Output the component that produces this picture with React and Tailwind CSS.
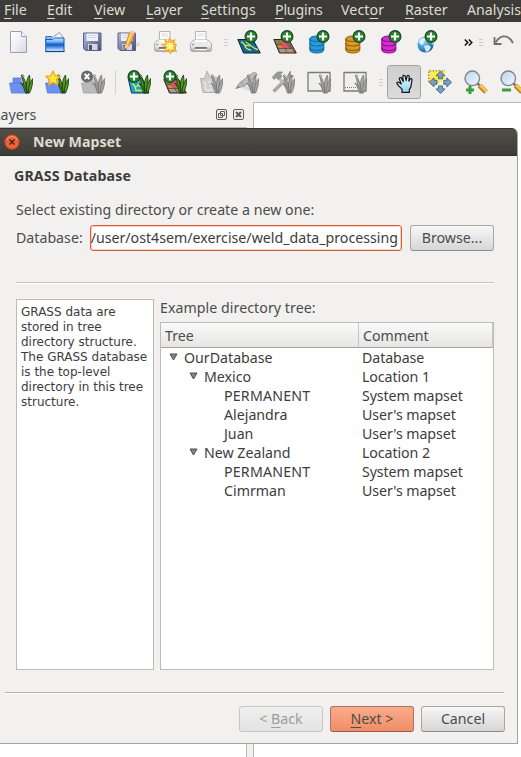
import React from "react";

const Icon = ({ children }) => (
  <svg width="24" height="24" viewBox="0 0 24 24" className="block shrink-0">
    {children}
  </svg>
);

const Gradients = () => (
  <svg width="0" height="0" className="absolute">
    <defs>
      <linearGradient id="paper" x1="0" y1="0" x2="1" y2="1">
        <stop offset="0" stopColor="#fff" />
        <stop offset=".5" stopColor="#f0f1f6" />
        <stop offset="1" stopColor="#d3d6e2" />
      </linearGradient>
      <linearGradient id="folder" x1="0" y1="0" x2="0" y2="1">
        <stop offset="0" stopColor="#cfe9ff" />
        <stop offset=".25" stopColor="#7fbcf5" />
        <stop offset=".5" stopColor="#1458c8" />
        <stop offset=".68" stopColor="#4d92e6" />
        <stop offset="1" stopColor="#f4faff" />
      </linearGradient>
      <linearGradient id="disk" x1="0" y1="0" x2="1" y2="1">
        <stop offset="0" stopColor="#b9c0dc" />
        <stop offset=".5" stopColor="#7d85aa" />
        <stop offset="1" stopColor="#474d72" />
      </linearGradient>
      <linearGradient id="printer" x1="0" y1="0" x2="0" y2="1">
        <stop offset="0" stopColor="#fdfdfd" />
        <stop offset=".6" stopColor="#e4e4e4" />
        <stop offset="1" stopColor="#a4a4a4" />
      </linearGradient>
      <radialGradient id="globe" cx=".35" cy=".3" r=".8">
        <stop offset="0" stopColor="#a8dcfa" />
        <stop offset=".5" stopColor="#3d9ad8" />
        <stop offset="1" stopColor="#0d4c92" />
      </radialGradient>
      <linearGradient id="lens" x1="0" y1="0" x2="1" y2="1">
        <stop offset="0" stopColor="#b9d3f0" />
        <stop offset="1" stopColor="#f2f8ff" />
      </linearGradient>
      <linearGradient id="hand" x1="0" y1="0" x2="0" y2="1">
        <stop offset="0" stopColor="#eaf8ff" />
        <stop offset="1" stopColor="#8fd3f8" />
      </linearGradient>
    </defs>
  </svg>
);

const Plus = ({ x = 14, y = 6.5 }) => (
  <g transform={`translate(${x} ${y})`}>
    <circle r="5.900" fill="#2a8230" stroke="#164d1c" strokeWidth="1.200" />
    <path d="M0-4V4M-4 0H4" stroke="#fff" strokeWidth="2.200" />
  </g>
);

const Grass = ({ gray }) => (
  <g
    fill={gray ? "#a6a6a6" : "#57981f"}
    stroke={gray ? "#7b7b7b" : "#1c3d0e"}
    strokeWidth=".9"
    strokeLinejoin="round"
  >
    <path d="M17 23C14.500 18 14.500 11 12.500 5.500c3.500 3 5 9 5.500 17.500z" />
    <path d="M18.500 23C16.500 16 17.500 9 20.500 5c1 6 .2 12-1 18z" />
    <path d="M19.200 23c0-6 1.500-11 4.600-14.500C23.800 14 22.500 19 20.500 23z" />
    <path d="M16.500 23c-1-4-2.200-7-4.700-10 3.800 2 5.400 5 6.200 10z" />
    <path d="M15 6.500c-.5-2-2.500-2.200-3-.5" fill="none" />
  </g>
);

const Floppy = () => (
  <g>
    <path d="M2.500 3h17.500v17.500h-15.500l-2-2z" fill="url(#disk)" stroke="#5a618a" />
    <path d="M5.500 3.500h11.500v7.500h-11.500z" fill="#eef1f8" />
    <path d="M7 5.500h8.500M7 7.500h8.500" stroke="#cdd1df" strokeWidth=".8" />
    <path d="M7 14h9.500v6h-9.500z" fill="#d4d7e2" />
    <path d="M8 15h3v5H8z" fill="#4b5275" />
  </g>
);

const Printer = () => (
  <g>
    <path d="M6.500 10V1.500h10.500V10z" fill="#fbfbfb" stroke="#b4b4b4" />
    <path d="M8.500 4h6.500M8.500 6h6.500" stroke="#dedede" />
    <path d="M4.500 10h14.500l3.500 3.500v6q0 2-2 2h-17q-2 0-2-2v-6z" fill="url(#printer)" stroke="#a5a5a5" strokeWidth=".9" />
    <path d="M6 9.500h12l1 3.500H5z" fill="#fdfdfd" stroke="#cacaca" strokeWidth=".6" />
    <path d="M6 18h12" stroke="#2e2e2e" strokeWidth="1.200" />
    <path d="M6.500 19.500h11" stroke="#fff" strokeWidth="1.300" />
    <path d="M3 14.500h2" stroke="#62c44c" strokeWidth="1.400" />
  </g>
);

const NewFile = () => (
  <Icon>
    <path d="M1.500 1.500h11l5 5v16h-16z" fill="url(#paper)" stroke="#9a9dab" />
    <path d="M12.500 1.500v5h5" fill="#fff" stroke="#9a9dab" />
  </Icon>
);
const OpenFile = () => (
  <Icon>
    <path d="M.8 6.500h6l1.500 2H18.500v4H.8z" fill="#7fc0f8" stroke="#2c74cf" />
    <path d="M4 10L14.500 2.500 18.500 8v4H4z" fill="#f5f6fc" stroke="#8088bb" strokeWidth=".9" />
    <path d="M.8 9.500h7l1.500-1.500h9.700V21.500H.8z" fill="url(#folder)" stroke="#1556bb" />
    <path d="M.5 21.500h19" stroke="#0c3f9b" strokeWidth="1.200" />
  </Icon>
);
const Save = () => (
  <Icon>
    <Floppy />
  </Icon>
);
const SaveAs = () => (
  <Icon>
    <path d="M17 14l5.500-2v3.500l-5 2z" fill="#d6d6d6" />
    <g transform="translate(-1.500 0)">
      <Floppy />
    </g>
    <path d="M7.500 19l1.300-6L12.500 2.500l4.800 1.500L12.500 15.500z" fill="#f8ad36" stroke="#d98022" strokeWidth=".7" />
    <path d="M14.500 3.500L10.300 14" stroke="#ffdf8c" strokeWidth="1.400" />
    <path d="M12.500 3l1-2.500 4.500 1.300-.8 2.700z" fill="#f5bca6" />
    <path d="M7.500 19l1.200-4.500 2.800 1.500z" fill="#f8e2b8" />
  </Icon>
);
const PrintNew = () => (
  <Icon>
    <Printer />
    <path
      d="M16.500 8.500l1.300 4L21.500 10l-1.200 4.200 3.500.8-3.300 2.200 2.700 4-4-1.700-1.700 4-1.500-4-4.500 2.200 2-4.700L9.500 15l4-1L12 10l3.400 2.500z"
      fill="#fff78a"
      stroke="#f8a51d"
      strokeWidth="1.200"
    />
  </Icon>
);
const Print = () => (
  <Icon>
    <Printer />
  </Icon>
);
const AddVector = () => (
  <Icon>
    <path d="M.8 9.500h15l7.500 13.500H6.500z" fill="#11679b" stroke="#15202c" />
    <path d="M4 12c3 0 2 3 5 3.500s5-.5 7 1.500 2 2 5 2.500M8 15.500c0 3 3 4 6 4.500M9 11.500c0 2 4 2 5 5" fill="none" stroke="#dbe63c" strokeWidth="1.300" />
    <Plus />
  </Icon>
);
const RasterTiles = () => (
  <g>
    <path d="M.8 9.500h15l7.500 13.500H6.500z" fill="#a55b3e" stroke="#332019" />
    <path d="M6 10h5.500l5 8.500h-5.500z" fill="#e0506f" />
    <path d="M1.500 10H5.500l2.500 4.500H4z" fill="#679145" />
    <path d="M4 14.500h4l2.200 4H6z" fill="#c88a3c" />
    <path d="M5.500 18.500h13l2 3.800H7.500z" fill="#a39a90" />
    <path d="M14 14.500h4l2 4h-3.500z" fill="#7a5b60" />
    <path d="M3 14.500h5.500M5 18.500h14M12 18.500l2 4" stroke="#533d35" strokeWidth=".7" />
  </g>
);
const AddRaster = () => (
  <Icon>
    <RasterTiles />
    <Plus />
  </Icon>
);
const Database = ({ fill, stroke }) => (
  <Icon>
    <path d="M.8 9c0-4 14-4 14 0v11c0 4-14 4-14 0z" fill={fill} stroke={stroke} />
    <path d="M.8 8.500c0 4 14 4 14 0M.8 13c0 4 14 4 14 0M.8 17.500c0 4 14 4 14 0" fill="none" stroke={stroke} strokeWidth="1.200" />
    <Plus />
  </Icon>
);
const AddGlobe = () => (
  <Icon>
    <circle cx="8.500" cy="14.500" r="8" fill="url(#globe)" />
    <path d="M1.500 12c2-4 5-5 7-4l1 2-3 1v3l-2 1zM7 16l4-1 3 2-2 4-3 1zM13 11l3 1v3l-2-2z" fill="#edfaff" opacity=".85" />
    <Plus />
  </Icon>
);
const Undo = () => (
  <Icon>
    <path d="M3.500 12.500C9 4 16.500 4.500 21 13" fill="none" stroke="#777" strokeWidth="2" />
    <path d="M2.500 7v7H9.500" fill="none" stroke="#6d6d6d" strokeWidth="1.800" />
  </Icon>
);

const Blocks = ({ fill = "#6b90f5", stroke = "#5d7cc9" }) => (
  <path d="M.5 13H4V8h8v5h9l-1.500 10H2.500z" fill={fill} stroke={stroke} strokeWidth=".8" />
);
const OpenMapset = () => (
  <Icon>
    <Blocks />
    <path d="M4 13h9" stroke="#5473c4" strokeWidth=".8" />
    <Grass />
  </Icon>
);
const NewMapset = () => (
  <Icon>
    <Blocks />
    <Grass />
    <path d="M8 1l2.200 4.800 5 .4-3.800 3.600 1.300 5.400L8 12.300l-4.500 2.900 1.200-5.400L.9 6.200l5-.4z" fill="#ffe92e" stroke="#f0a41c" strokeWidth="1.200" strokeLinejoin="round" />
  </Icon>
);
const CloseMapset = () => (
  <Icon>
    <Blocks fill="#b9b9b9" stroke="#a2a2a2" />
    <Grass gray />
    <circle cx="6" cy="6.500" r="6" fill="#6b6b6b" />
    <path d="M3.700 3.800l4.600 5.400M8.300 3.800L3.700 9.200" stroke="#fff" strokeWidth="2" />
  </Icon>
);
const GrassVector = () => (
  <Icon>
    <path d="M1 7.500h14l7 15.500H4.500z" fill="#1ea3d8" stroke="#14364c" />
    <path d="M5 14c3 0 3 3 4 6.500h6M12 12c-1 3-1 5-4 5M10 15l5 2" fill="none" stroke="#dfeb38" strokeWidth="1.300" />
    <Grass />
    <Plus x={7} />
  </Icon>
);
const GrassRaster = () => (
  <Icon>
    <RasterTiles />
    <Grass />
    <Plus x={7} />
  </Icon>
);
const GrassStar = () => (
  <Icon>
    <path d="M1.500 8.500h4L8 1l3 6.500h8l1 15H4z" fill="#cfcfcf" stroke="#b2b2b2" />
    <path d="M5 12l2 3-1 3 3 3 4-2M9 11l4 3-2 3" fill="none" stroke="#e8e8e8" strokeWidth="1.400" />
    <Grass gray />
  </Icon>
);
const GrassEdit = () => (
  <Icon>
    <path d="M6 18l6-2 6 6z" fill="#d9d9d9" />
    <path d="M.8 18.500L5.500 12 17.500 3q4.500-1.500 4.500 2.500L9.500 16z" fill="#bcbcbc" stroke="#979797" strokeWidth=".9" />
    <path d="M.8 18.500l2.400-3.300 2 2.200z" fill="#888" />
    <path d="M5.500 12l4 4" stroke="#8d8d8d" />
    <Grass gray />
  </Icon>
);
const GrassTools = () => (
  <Icon>
    <path d="M2.500 21.500L19 5.500" stroke="#a9a9a9" strokeWidth="3.600" />
    <path d="M8 8l11 13" stroke="#b9b9b9" strokeWidth="3" />
    <path d="M1.500 7l5-5h5l-2 2.500 1.500 2-4 3-2-2-2 2zM17 5l2.500-4v4l3 1-3 3z" fill="#999" stroke="#868686" strokeWidth=".8" />
    <Grass gray />
  </Icon>
);
const GrassRegion = ({ dashed }) => (
  <Icon>
    <path d="M1 2.500h22v18.500H1z" fill="#efefee" stroke="#7b7b7b" strokeWidth="1.300" />
    {dashed && <path d="M2 17.500h20" stroke="#777" strokeDasharray="1 1" />}
    <Grass gray />
  </Icon>
);
const Hand = () => (
  <Icon>
    <g transform="translate(3.800 .6)">
      <path
        d="M6.200 21.800v-3.300L2.500 15 1 12.300q1-1.800 3 0l1.500 1L3.500 8.500q0-2.300 2-1.200L7.500 11 7 6q.3-2 2.300-.8L10.300 10l1-4.500q1.200-1.500 2.200.3L13 10.500l1.500-2.300q1.800-.8 1.700 1.200L15 16.500l-1.500 2.500v2.800z"
        fill="url(#hand)"
        stroke="#151515"
        strokeWidth="1.200"
        strokeLinejoin="round"
      />
    </g>
  </Icon>
);
const PanSelection = () => (
  <Icon>
    <path d="M1 1h16v7l-7 6H1z" fill="#ffed48" />
    <path d="M.8 12V.8H17" fill="none" stroke="#6d6020" strokeDasharray="1.500 1.500" />
    <g fill="#7c9fba" stroke="#3f6380" strokeWidth=".9">
      <path d="M12.500 1.200l4.500 4.600h-2.500v3h-4v-3H8zM12.500 23.500L8 18.900h2.500v-3h4v3H17zM1.200 12.300l4.800-4.500v2.500h3v4H6v2.500zM23.600 12.300l-4.800-4.500v2.500h-3v4h3v2.500z" />
    </g>
  </Icon>
);
const Zoom = ({ minus }) => (
  <Icon>
    <path d="M13.500 13.500l2.500 2.500" stroke="#777" strokeWidth="2.500" />
    <path d="M15.500 15.500l6.500 6.500" stroke="#c07f24" strokeWidth="5" />
    <path d="M16 15l6.500 6.500" stroke="#fbc650" strokeWidth="2.800" />
    <circle cx="8.300" cy="8.300" r="7.300" fill="url(#lens)" stroke="#858585" strokeWidth="1.400" />
    <path d={minus ? "M2 20h9" : "M2 20h8M6 16v8"} stroke="#37a03a" strokeWidth="3" />
  </Icon>
);

const Handle = () => (
  <div className="flex w-1 shrink-0 flex-col gap-0.5">
    <i className="h-px bg-[#cfccc9]" />
    <i className="h-px bg-[#cfccc9]" />
    <i className="h-px bg-[#cfccc9]" />
  </div>
);

const Key = ({ children }) => (
  <span className="underline decoration-1 underline-offset-[3px]">{children}</span>
);

const MenuBar = () => (
  <div className="flex h-[22px] shrink-0 bg-[#3c3b37] pl-1 leading-[20px] text-[#dfdbd2]">
    <div className="w-[43px] shrink-0"><Key>F</Key>ile</div>
    <div className="w-[47px] shrink-0"><Key>E</Key>dit</div>
    <div className="w-[52px] shrink-0"><Key>V</Key>iew</div>
    <div className="w-[55px] shrink-0"><Key>L</Key>ayer</div>
    <div className="w-[74px] shrink-0 tracking-[0.1px]"><Key>S</Key>ettings</div>
    <div className="w-[66px] shrink-0 tracking-[-0.2px]"><Key>P</Key>lugins</div>
    <div className="w-[64px] shrink-0 tracking-[0.1px]">Vect<Key>o</Key>r</div>
    <div className="w-[62px] shrink-0"><Key>R</Key>aster</div>
    <div className="shrink-0">Analysis</div>
  </div>
);

const Toolbars = () => (
  <div className="h-20 shrink-0">
    <div className="flex h-10 items-center pl-[9px]">
      <div className="flex gap-3">
        <NewFile />
        <OpenFile />
        <Save />
        <SaveAs />
        <PrintNew />
        <Print />
      </div>
      <div className="flex w-6 shrink-0 justify-center pl-0.5"><Handle /></div>
      <div className="flex gap-3">
        <AddVector />
        <AddRaster />
        <Database fill="#299bdc" stroke="#176aa6" />
        <Database fill="#d79b28" stroke="#91600f" />
        <Database fill="#d52bd0" stroke="#8b0f8a" />
        <AddGlobe />
      </div>
      <svg width="9" height="7" viewBox="0 0 9 7" className="ml-[23px] shrink-0">
        <path d="M.8.5l3 3-3 3M4.800.5l3 3-3 3" fill="none" stroke="#111" strokeWidth="1.500" />
      </svg>
      <div className="ml-[6px]"><Handle /></div>
      <div className="ml-[9px]"><Undo /></div>
    </div>
    <div className="flex h-10 items-center pl-[9px]">
      <div className="flex gap-3">
        <OpenMapset />
        <NewMapset />
        <CloseMapset />
      </div>
      <div className="ml-[10px] mr-[11px] h-6 w-px shrink-0 bg-[#d5d3d0]" />
      <div className="flex gap-3">
        <GrassVector />
        <GrassRaster />
        <GrassStar />
        <GrassEdit />
        <GrassTools />
        <GrassRegion />
        <GrassRegion dashed />
      </div>
      <div className="ml-3"><Handle /></div>
      <div className="ml-1 flex h-[34px] w-[34px] shrink-0 items-center justify-center rounded-[3px] border border-[#a6a4a1] bg-linear-to-b from-[#cfcfcf] to-[#dbdbdb]">
        <Hand />
      </div>
      <div className="ml-[7px] flex gap-3">
        <PanSelection />
        <Zoom />
        <Zoom minus />
      </div>
    </div>
  </div>
);

const DockButton = ({ children }) => (
  <svg width="11" height="11" viewBox="0 0 11 11" fill="none" stroke="#5d5b58">
    <rect x=".5" y=".5" width="10" height="10" rx="1.500" />
    {children}
  </svg>
);

const Workspace = () => (
  <div className="flex min-h-0 flex-1">
    <div className="flex w-[247px] shrink-0 flex-col">
      <div className="flex h-[26px] shrink-0 items-center justify-between border-b border-[#b9b7b3] pr-[3px]">
        <span className="-ml-[7px]">Layers</span>
        <div className="flex gap-1.5">
          <DockButton>
            <path d="M4.500 2.500h4v4h-4zM2.500 4.500h4v4h-4z" />
          </DockButton>
          <DockButton>
            <path d="M3 3l5 5M8 3L3 8" strokeWidth="2" />
          </DockButton>
        </div>
      </div>
      <div className="flex-1 border-r border-[#b9b7b3] bg-white" />
    </div>
    <div className="ml-1.5 flex-1 border-l border-t border-[#b9b7b3] bg-white" />
  </div>
);

const BUTTON = "flex h-[26px] w-[84px] shrink-0 items-center justify-center rounded-[3px] border pb-px";

const COMMON = "border-[#aaa8a5] border-b-[#8e8c89] bg-linear-to-b from-[#f7f7f7] to-[#d6d6d6]";

const rows = [
  [0, "OurDatabase", "Database", true],
  [1, "Mexico", "Location 1", true],
  [2, "PERMANENT", "System mapset"],
  [2, "Alejandra", "User's mapset"],
  [2, "Juan", "User's mapset"],
  [1, "New Zealand", "Location 2", true],
  [2, "PERMANENT", "System mapset"],
  [2, "Cimrman", "User's mapset"],
];
const INDENT = ["pl-[8px]", "pl-[28px]", "pl-[48px]"];

const Tree = () => (
  <div className="flex flex-1 flex-col border border-[#bebbb6] bg-white text-[#3c3c3c]">
    <div className="flex h-[25px] shrink-0 border-b border-[#a6a4a1] bg-linear-to-b from-[#fafafa] to-[#e6e5e4] leading-[25px] text-[#4c4c4c]">
      <div className="w-[198px] border-r border-[#c8c6c3] pl-1">Tree</div>
      <div className="flex-1 border-r border-[#c8c6c3] pl-1 tracking-[-0.05px]">Comment</div>
    </div>
    {rows.map(([level, name, comment, open], i) => (
      <div key={i} className="flex h-[19px] shrink-0 leading-[19px]">
        <div className={`flex w-[201px] shrink-0 items-center ${INDENT[level]}`}>
          <span className="w-[15px] shrink-0">
            {open && (
              <svg width="9" height="8" viewBox="0 0 9 8" className="-mt-0.5 block">
                <path d="M1 1h7L4.500 7z" fill="#858585" stroke="#4c4c4c" />
              </svg>
            )}
          </span>
          <span className={name === "PERMANENT" ? "tracking-[0.2px]" : ""}>{name}</span>
        </div>
        <div className="tracking-[-0.08px]">{comment}</div>
      </div>
    ))}
  </div>
);

const Dialog = () => (
  <div className="absolute left-0 top-[128px] flex h-[616px] w-[518px] flex-col overflow-hidden rounded-tr-[6px] border-b border-r border-[#a5a3a0] bg-[#f2f1f0]">
    <div className="-mr-px flex h-7 shrink-0 items-center border-b border-t border-b-[#2f2e2b] border-t-[#33322e] bg-linear-to-b from-[#4f4e47] to-[#3d3c38] pl-[4px] text-[#dfdbd2]">
      <svg width="16" height="16" viewBox="0 0 16 16">
        <circle cx="8" cy="8" r="7.300" fill="#ee6237" stroke="#b5431f" />
        <path d="M2.500 6a6 6 0 0 1 11 0" fill="none" stroke="#f99673" />
        <path d="M5.500 5.500l5 5M10.500 5.500l-5 5" stroke="#442419" strokeWidth="1.400" />
      </svg>
      <b className="ml-[13px]">New Mapset</b>
    </div>
    <div className="pl-[14px] pt-[10px] font-bold leading-5 tracking-[0.12px] text-[#3c3c3c]">GRASS Database</div>
    <div className="pl-4 pt-[14px] leading-5 tracking-[0.02px]">Select existing directory or create a new one:</div>
    <div className="mt-[5px] flex h-[26px] shrink-0 items-center pl-4">
      <span className="w-[74px]">Database:</span>
      <div className="flex h-[26px] w-[312px] justify-end overflow-hidden whitespace-nowrap rounded-[3px] border border-[#dd5b31] bg-white pr-[3px] leading-[23px] text-[#3c3c3c] shadow-[inset_0_0_0_1px_#f8d4c8]">
        /user/ost4sem/exercise/weld_data_processing
      </div>
      <div className={`ml-2 ${BUTTON} ${COMMON}`}>Browse...</div>
    </div>
    <div className="ml-4 mt-[31px] h-0.5 w-[478px] shrink-0 border-b border-t border-b-white border-t-[#c4c2bf]" />
    <div className="ml-4 mt-[15px] flex h-[371px] w-[478px] shrink-0 gap-1.5">
      <div className="w-[138px] shrink-0 whitespace-nowrap border border-[#bebbb6] bg-white pl-1 pt-[5px] font-['DejaVu_Sans',sans-serif] text-[12px] leading-[15px] text-[#3c3c3c]">
        GRASS data are<br />stored in tree<br />directory structure.<br />The GRASS database<br />is the top-level<br />directory in this tree<br />structure.
      </div>
      <div className="flex flex-1 flex-col">
        <div className="h-[23px] shrink-0 leading-[18px] tracking-[0.05px]">Example directory tree:</div>
        <Tree />
      </div>
    </div>
    <div className="ml-[5px] mt-[22px] h-0.5 w-[499px] shrink-0 border-b border-t border-b-white border-t-[#b2b0ad]" />
    <div className="mr-[12px] mt-3 flex justify-end gap-[7px]">
      <div className={`${BUTTON} border-[#c9c7c5] bg-linear-to-b from-[#efefef] to-[#e4e4e4] text-[#9d9b98]`}>
        <span>&lt; <Key>B</Key>ack</span>
      </div>
      <div className={`${BUTTON} border-[#ab7560] border-b-[#8e5f4c] bg-linear-to-b from-[#faab8c] to-[#f08e67]`}>
        <span><Key>N</Key>ext &gt;</span>
      </div>
      <div className={`${BUTTON} ${COMMON}`}>Cancel</div>
    </div>
  </div>
);

export default function App() {
  return (
    <div className="relative flex h-[757px] w-[521px] flex-col overflow-hidden bg-[#f2f1f0] font-['Noto_Sans',sans-serif] text-[14.2px] text-[#4c4c4c]">
      <Gradients />
      <MenuBar />
      <Toolbars />
      <Workspace />
      <Dialog />
    </div>
  );
}
